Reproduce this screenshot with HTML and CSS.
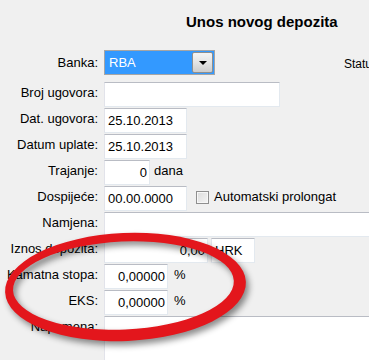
FILE: index.html
```html
<!DOCTYPE html>
<html lang="hr">

<head>
  <meta charset="UTF-8" />
  <meta name="viewport" content="width=device-width, initial-scale=1.0" />
  <title>Unos novog depozita</title>
  <link rel="stylesheet" href="styles.css">
</head>

<body>
  <div class="screen">
    <h1 class="title">Unos novog depozita</h1>

    <div class="form">
      <div class="row row-select">
        <label class="lbl">Banka:</label>
        <div class="select">
          <span class="select-value">RBA</span>
          <span class="select-btn"><span class="arrow"></span></span>
        </div>
        <span class="status">Status:</span>
      </div>

      <div class="row">
        <label class="lbl" for="brojUgovora">Broj ugovora:</label>
        <input id="brojUgovora" class="field w-broj" type="text" value="" />
      </div>

      <div class="row">
        <label class="lbl" for="datUgovora">Dat. ugovora:</label>
        <input id="datUgovora" class="field w-date" type="text" value="25.10.2013" />
      </div>

      <div class="row">
        <label class="lbl" for="datumUplate">Datum uplate:</label>
        <input id="datumUplate" class="field w-date" type="text" value="25.10.2013" />
      </div>

      <div class="row">
        <label class="lbl" for="trajanje">Trajanje:</label>
        <input id="trajanje" class="field w-short num" type="text" value="0" />
        <span class="unit unit-dana">dana</span>
      </div>

      <div class="row">
        <label class="lbl" for="dospijece">Dospijeće:</label>
        <input id="dospijece" class="field w-date" type="text" value="00.00.0000" />
        <label class="check">
          <span class="check-box"></span>
          Automatski prolongat
        </label>
      </div>

      <div class="row">
        <label class="lbl" for="namjena">Namjena:</label>
        <input id="namjena" class="field w-wide" type="text" value="" />
      </div>

      <div class="row">
        <label class="lbl" for="iznos">Iznos depozita:</label>
        <input id="iznos" class="field w-iznos num" type="text" value="0,00" />
        <input class="field w-valuta" type="text" value="HRK" />
      </div>

      <div class="row">
        <label class="lbl" for="kamatna">Kamatna stopa:</label>
        <input id="kamatna" class="field w-rate num" type="text" value="0,00000" />
        <span class="unit unit-pct">%</span>
      </div>

      <div class="row">
        <label class="lbl" for="eks">EKS:</label>
        <input id="eks" class="field w-rate num" type="text" value="0,00000" />
        <span class="unit unit-pct">%</span>
      </div>

      <div class="row row-note">
        <label class="lbl" for="napomena">Napomena:</label>
        <textarea id="napomena" class="field note"></textarea>
      </div>
    </div>

    <!-- crveni krug oko kamatne stope -->
    <svg class="mark" width="369" height="360" viewBox="0 0 369 360" aria-hidden="true">
      <g transform="rotate(-2.5 125 287)">
        <path fill="#e3161c" fill-rule="evenodd"
          d="M 5 287 a 120.5 54 0 1 0 241 0 a 120.5 54 0 1 0 -241 0 Z
             M 13 285.5 a 110.5 44 0 1 0 221 0 a 110.5 44 0 1 0 -221 0 Z" />
      </g>
    </svg>
  </div>
</body>

</html>
```

FILE: styles.css
```css
body {
  margin: 0;
  background: #f0f0f0;
  font-family: "Liberation Sans", Arial, sans-serif;
  font-size: 13px;
  color: #000;
  overflow: hidden;
}

.screen {
  position: relative;
  width: 369px;
  height: 360px;
  overflow: hidden;
  padding-top: 13px;
  box-sizing: border-box;
}

.title {
  margin: 0 0 19px 186px;
  font-size: 15px;
  line-height: 18px;
  font-weight: bold;
  white-space: nowrap;
}

.form {
  display: flex;
  flex-direction: column;
  gap: 1px;
}

.row {
  display: flex;
  align-items: flex-start;
  height: 25px;
  white-space: nowrap;
}

.row > * {
  flex: none;
}

.row-select {
  margin-bottom: 6px;
}

.lbl {
  width: 98px;
  margin-right: 6px;
  text-align: right;
  line-height: 21px;
}

.row-select .lbl {
  line-height: 25px;
}

.select {
  display: flex;
  width: 111px;
  height: 25px;
  box-sizing: border-box;
  border: 1px solid #a5a5a5;
  background: #3399ff;
}

.select-value {
  flex: 1;
  padding-left: 4px;
  color: #fff;
  line-height: 23px;
}

.select-btn {
  display: flex;
  align-items: center;
  justify-content: center;
  width: 21px;
  margin: 1px;
  box-sizing: border-box;
  border: 1px solid #8e8f8f;
  border-radius: 2px;
  background: linear-gradient(#f4f4f4, #e4e4e4 50%, #cdcdcd);
}

.arrow {
  width: 0;
  height: 0;
  border-left: 4px solid transparent;
  border-right: 4px solid transparent;
  border-top: 4px solid #000;
}

.status {
  margin-left: 129px;
  padding-top: 2px;
  font-size: 12px;
  line-height: 25px;
}

.field {
  height: 25px;
  box-sizing: border-box;
  margin: 0;
  padding: 0 3px;
  border: 1px solid;
  border-color: #b9bcc4 #e3e9ef #e3e9ef #e2e3ea;
  background: #fff;
  font-family: inherit;
  font-size: 13px;
  color: #000;
  outline: none;
}

.num {
  text-align: right;
  padding-right: 2px;
}

.w-broj { width: 176px; }
.w-date { width: 83px; }
.w-short { width: 46px; }
.w-wide { width: 300px; }
.w-iznos { width: 104px; }
.w-valuta { width: 44px; margin-left: 3px; }
.w-rate { width: 64px; }

.unit {
  line-height: 22px;
}

.unit-dana {
  margin-left: 4px;
}

.unit-pct {
  margin-left: 6px;
}

.check {
  display: flex;
  align-items: center;
  gap: 5px;
  margin-left: 9px;
  line-height: 22px;
}

.check-box {
  width: 13px;
  height: 13px;
  box-sizing: border-box;
  border: 1px solid #8f8f8f;
  background: linear-gradient(135deg, #dcdcdc, #f4f4f4);
  box-shadow: inset 0 0 0 1px #f7f7f7;
}

.row-note {
  height: 90px;
}

.note {
  width: 300px;
  height: 90px;
  resize: none;
}

.mark {
  position: absolute;
  left: 0;
  top: 0;
  pointer-events: none;
  filter: drop-shadow(3px 4px 3px rgba(0, 0, 0, 0.45));
}
```
